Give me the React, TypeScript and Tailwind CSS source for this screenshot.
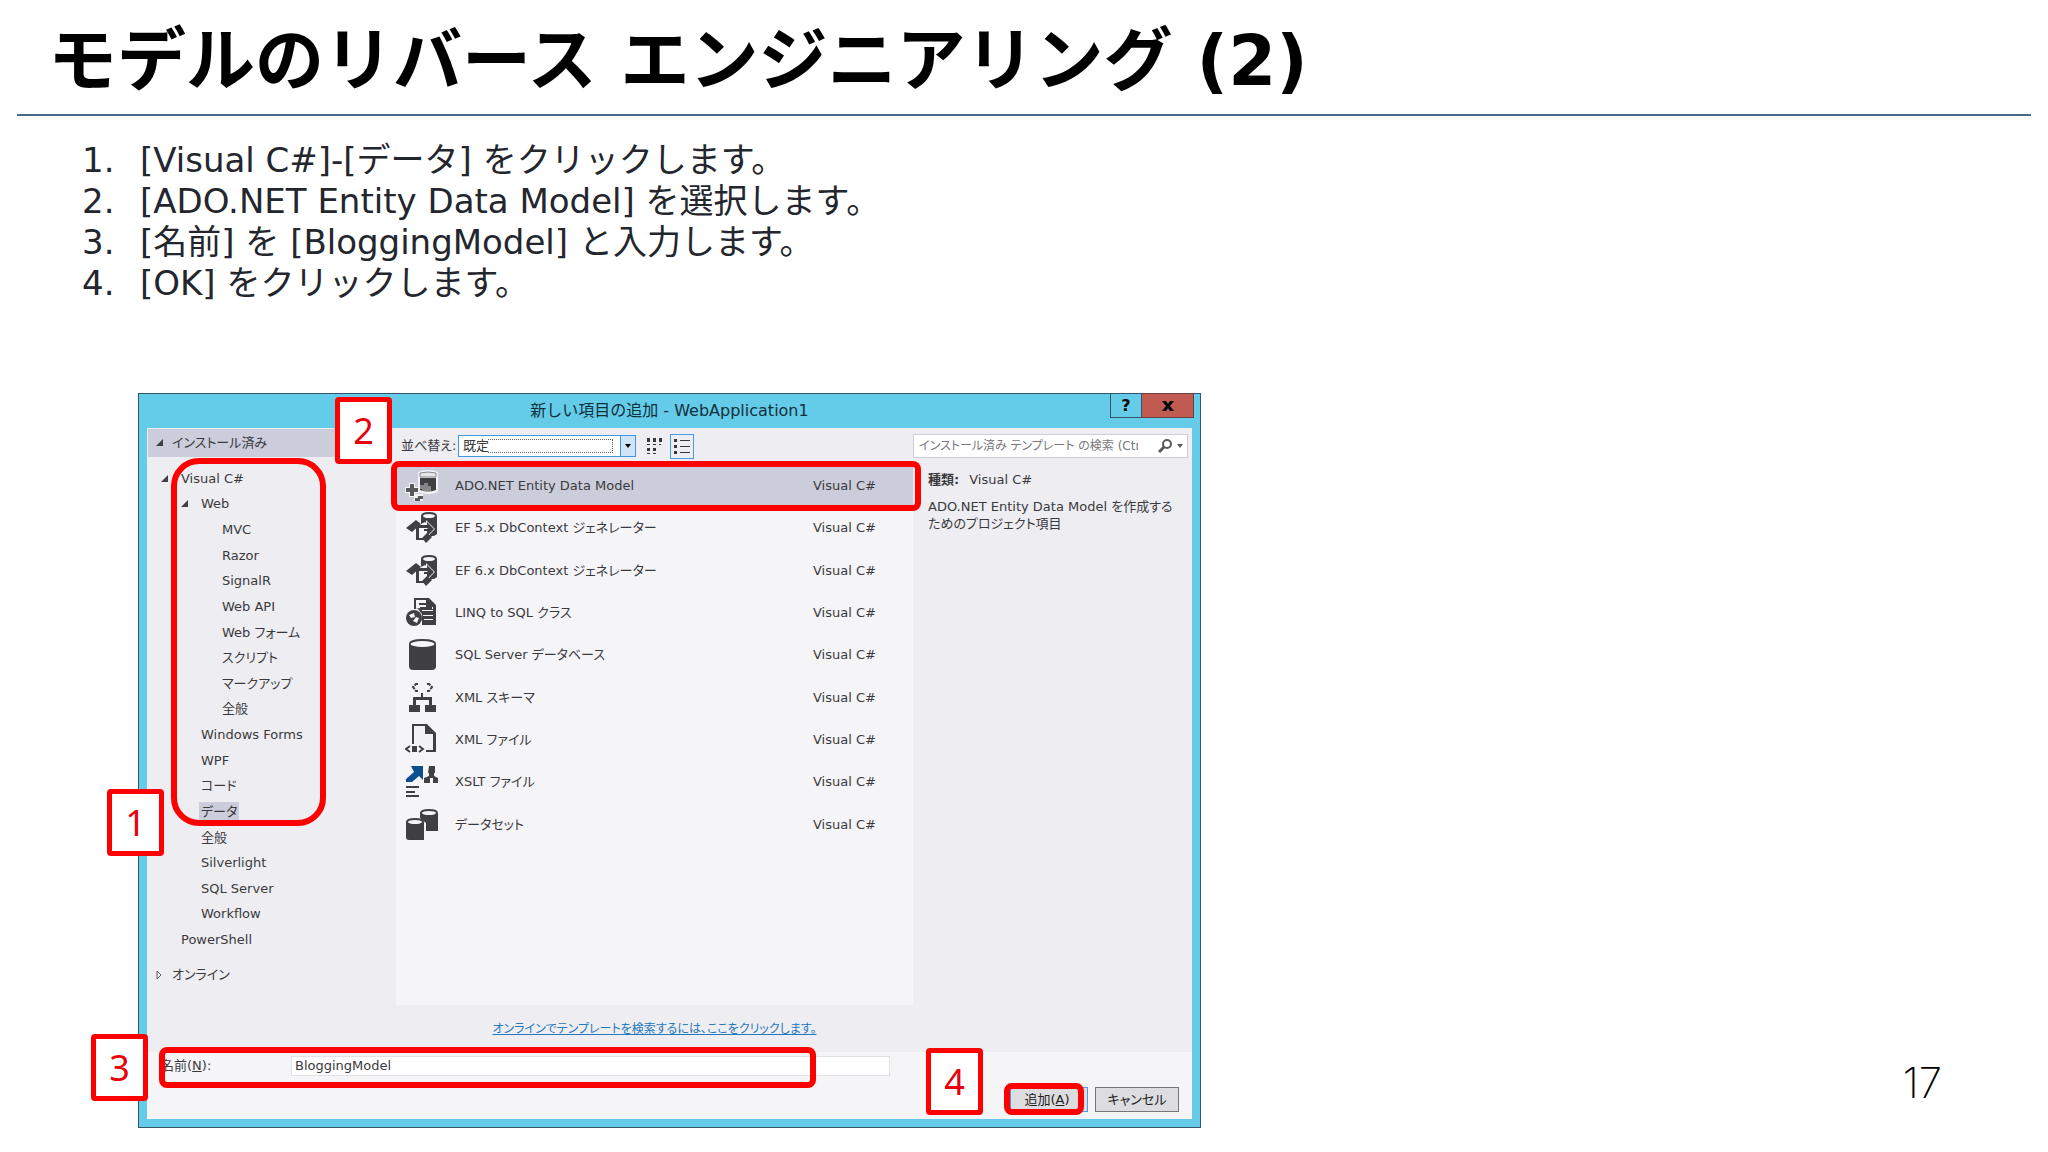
import type { ReactNode } from 'react';

const steps = [
    '[Visual C#]-[データ] をクリックします。',
    '[ADO.NET Entity Data Model] を選択します。',
    '[名前] を [BloggingModel] と入力します。',
    '[OK] をクリックします。',
];

const tree = [
    { label: 'Visual C#', level: 0, open: true },
    { label: 'Web', level: 1, open: true },
    { label: 'MVC', level: 2 },
    { label: 'Razor', level: 2 },
    { label: 'SignalR', level: 2 },
    { label: 'Web API', level: 2 },
    { label: 'Web フォーム', level: 2 },
    { label: 'スクリプト', level: 2 },
    { label: 'マークアップ', level: 2 },
    { label: '全般', level: 2 },
    { label: 'Windows Forms', level: 1 },
    { label: 'WPF', level: 1 },
    { label: 'コード', level: 1 },
    { label: 'データ', level: 1, selected: true },
    { label: '全般', level: 1 },
    { label: 'Silverlight', level: 1 },
    { label: 'SQL Server', level: 1 },
    { label: 'Workflow', level: 1 },
    { label: 'PowerShell', level: 0 },
];

const indent = ['pl-[14px]', 'pl-[34px]', 'pl-[55px]'];

const templates = [
    { name: 'ADO.NET Entity Data Model', icon: <EntityIcon /> },
    { name: 'EF 5.x DbContext ジェネレーター', icon: <GeneratorIcon /> },
    { name: 'EF 6.x DbContext ジェネレーター', icon: <GeneratorIcon /> },
    { name: 'LINQ to SQL クラス', icon: <LinqIcon /> },
    { name: 'SQL Server データベース', icon: <DatabaseIcon /> },
    { name: 'XML スキーマ', icon: <SchemaIcon /> },
    { name: 'XML ファイル', icon: <XmlFileIcon /> },
    { name: 'XSLT ファイル', icon: <XsltIcon /> },
    { name: 'データセット', icon: <DataSetIcon /> },
];

function Icon({ children }: { children: ReactNode }) {
    return (
        <svg viewBox="0 0 34 34" className="w-[34px] h-[34px] shrink-0" fill="#404044" aria-hidden="true">
            {children}
        </svg>
    );
}

function EntityIcon() {
    return (
        <Icon>
            <path d="M13 3q10-4 20 0v20q-10 4-20 0z" fill="#f4f4f6" />
            <path d="M15 9h16v12q-8 3-16 0z" />
            <path d="M15 4q8-2 16 0v4H15z" fill="#e6e6e8" stroke="#8a8a8e" />
            <path d="M4 14h6v4h4v6h-4v4H4v-4H0v-6h4zM9 25h9v7H9z" fill="#f4f4f6" />
            <path d="M5 15h4v4h4v4H9v4H5v-4H1v-4h4zM10 29h3v-2h5v3h-3v2h-5z" fill="#58585c" />
            <path d="M15 16h4v-2h4v3h3v5h-9v-2h-2z" fill="#85858a" />
        </Icon>
    );
}

function GeneratorIcon() {
    return (
        <Icon>
            <path d="M16 5q0-4 8-4t8 4v18q-3 3-8 2l3-7-7-7-4 2z" />
            <ellipse cx="24" cy="5" rx="6" ry="2" fill="#f5f4f6" />
            <path d="M10 13h11v-4l9 9-9 9v-4h-6v-2h-2z" fill="#f5f4f6" />
            <path d="M1 17l10-8 5 4-9 8zM17 27l5-5 5 4-6 6z" />
            <path d="M11 14h11v-3l7 7-7 7v-5h-3v-2h3l1-1h-9v10h5v2h-8z" />
        </Icon>
    );
}

function LinqIcon() {
    return (
        <Icon>
            <path d="M9 13V2h15l7 7v20H17V18l-4-5z" />
            <path d="M11 13V4h10v7h7v2H16l-2-1z" fill="#f5f4f6" />
            <path d="M14 7h8v2h-8zM15 11h12v2H15zM17 16h11v2H17zM19 20h9v2h-9zM19 25h9v1h-9z" />
            <path d="M17 14h11v1H17zM18 19h10v1H18zM19 23h9v1h-9z" fill="#f5f4f6" />
            <circle cx="9" cy="22" r="8" />
            <path d="M4 19l5-2 1 4-4 1zM11 21l3 1-2 5-4-2z" fill="#f5f4f6" />
        </Icon>
    );
}

function DatabaseIcon() {
    return (
        <Icon>
            <path d="M4 6q0-5 13.500-5T31 6v22q0 4-4 4H8q-4 0-4-4z" />
            <ellipse cx="17.500" cy="6" rx="12" ry="3" fill="#f5f4f6" />
        </Icon>
    );
}

function SchemaIcon() {
    return (
        <Icon>
            <path d="M13 3h-2L8 6l3 4h2M22 3h2l3 3-3 4h-2" fill="none" stroke="#404044" strokeWidth="2" strokeDasharray="4 1" />
            <path d="M16 12h2v4h9v8h4v7H20v-7h4v-5H11v5h4v7H4v-7h4v-8h8z" />
        </Icon>
    );
}

function XmlFileIcon() {
    return (
        <Icon>
            <path d="M7 1h15l9 9v19H21v-2h7V11h-8V3H9v18H7z" />
            <path d="M9 3h11v8h8v16h-7v-5H9z" fill="#f2f1f4" />
            <path d="M5 23l-4 3 4 3M14 23l4 3-4 3" fill="none" stroke="#404044" strokeWidth="2" />
            <path d="M7 23h5v6H7z" />
        </Icon>
    );
}

function XsltIcon() {
    return (
        <Icon>
            <path d="M6 1h12v14l-4-4-7 6H1v-3l8-7z" fill="#0b4f8f" />
            <path d="M24 1h6v7h-1v3l4 2v5h-5v-5h-3v5h-6v-5l5-2V8h-1z" />
            <path d="M1 21h13v2H1zM1 26h9v2H1zM1 30h13v2H1z" />
        </Icon>
    );
}

function DataSetIcon() {
    return (
        <Icon>
            <path d="M15 5q0-4 9-4t9 4v18H21v-8l-6-5z" />
            <ellipse cx="24" cy="5" rx="7" ry="2" fill="#f5f4f6" />
            <path d="M1 14q0-4 9-4t9 4v18H4q-3 0-3-3z" />
            <ellipse cx="10" cy="14" rx="7" ry="2" fill="#f5f4f6" />
        </Icon>
    );
}

function OpenArrow() {
    return (
        <svg viewBox="0 0 8 8" className="w-2 h-2 shrink-0" fill="#404044" aria-hidden="true">
            <path d="M7 0v7H0z" />
        </svg>
    );
}

/* Numbered red callout; the caller places it over the dialog */
function Badge({ value, className }: { value: number; className: string }) {
    return (
        <span
            className={`absolute z-20 flex w-[57px] h-[67px] items-center justify-center rounded-sm border-[5px] border-[#fe0000] bg-white font-['Noto_Sans',sans-serif] text-4xl text-[#e8000c] ${className}`}
        >
            {value}
        </span>
    );
}

function Dialog() {
    return (
        <section
            aria-label="新しい項目の追加"
            className="relative ml-[138px] w-[52vw] max-w-[1063px] min-w-[900px] border border-[#33566a] bg-[#64cbe8] px-2 pb-2 text-[13px] leading-5 text-[#3a3a3e] [font-feature-settings:'palt']"
        >
            {/* Title bar */}
            <header className="relative flex h-[34px] items-center justify-center">
                <h2 className="text-base text-[#12303c] [font-feature-settings:normal]">新しい項目の追加 - WebApplication1</h2>
                <div className="absolute top-0 -right-[2px] -mt-px flex h-[25px]">
                    <button aria-label="ヘルプ" className="w-8 border border-[#33566a] text-base leading-none font-bold text-black">?</button>
                    <button aria-label="閉じる" className="flex w-[52px] items-center justify-center border border-l-0 border-[#6b4044] bg-[#c15a50]">
                        <svg viewBox="0 0 12 10" className="w-3 h-[10px]" aria-hidden="true">
                            <path d="M0 0h4l2 3 2-3h4L8 5l4 5H8L6 7l-2 3H0l4-5z" />
                        </svg>
                    </button>
                </div>
            </header>

            <div className="flex bg-[#eeedf2]">
                {/* Categories */}
                <nav className="relative w-[249px] shrink-0">
                    <div className="mt-px ml-px mr-[5px] flex h-7 items-center gap-2 bg-[#cbcddb] pl-2">
                        <OpenArrow />
                        インストール済み
                    </div>
                    <ul className="mt-[9px] flex h-[487px] flex-col">
                        {tree.map((node, i) => (
                            <li key={i} className={`flex flex-1 items-center ${indent[node.level]}`}>
                                <span className="w-5">{node.open && <OpenArrow />}</span>
                                <a href="#" className={node.selected ? '-ml-0.5 bg-[#cbcddb] px-0.5' : ''}>{node.label}</a>
                            </li>
                        ))}
                    </ul>
                    <div className="mt-2 flex h-7 items-center gap-2 pl-[9px]">
                        <svg viewBox="0 0 8 10" className="w-2 h-[10px]" aria-hidden="true">
                            <path d="M1 1l4 4-4 4z" fill="none" stroke="#606064" />
                        </svg>
                        オンライン
                    </div>
                    <span className="absolute top-[30px] left-6 z-10 h-[368px] w-[155px] rounded-[28px] border-[6px] border-[#fe0000]" />
                    <Badge value={2} className="-top-[31px] left-[188px]" />
                    <Badge value={1} className="top-[361px] -left-10" />
                </nav>

                {/* Templates */}
                <div className="min-w-0 flex-1">
                    <div className="flex h-9 items-center pl-[5px]">
                        <label htmlFor="sort" className="w-[57px] whitespace-nowrap">並べ替え:</label>
                        <span className="relative">
                            <select id="sort" className="block h-[22px] w-[178px] appearance-none border border-[#3c9be0] bg-white pl-1 leading-5">
                                <option>既定</option>
                            </select>
                            <span className="pointer-events-none absolute top-1 right-[23px] h-[14px] w-[125px] border border-l-0 border-dotted border-[#606064]" />
                            <span className="pointer-events-none absolute top-0 right-0 flex h-[22px] w-4 items-center justify-center border border-[#3c9be0] bg-[#cfe4f7]">
                                <svg viewBox="0 0 6 4" className="w-[6px] h-1" aria-hidden="true"><path d="M0 0h6L3 4z" /></svg>
                            </span>
                        </span>
                        <button aria-label="小さいアイコン" className="ml-[10px] flex h-6 w-6 items-center">
                            <svg viewBox="0 0 16 16" className="w-4 h-4" fill="#38383c">
                                <path d="M1 0h3v4H1zM7 0h3v4H7zM13 0h3v4h-3zM1 6h3v1H1zM7 6h3v1H7zM13 6h2v1h-2zM1 10h3v3H1zM7 10h3v3H7zM1 15h3v1H1zM7 15h3v1H7z" />
                            </svg>
                        </button>
                        <button aria-label="一覧" className="flex h-[25px] w-6 items-center justify-center border border-[#4a9be8]">
                            <svg viewBox="0 0 16 16" className="w-4 h-4" fill="#38383c">
                                <path d="M0 1h3v3H0zM0 7h3v3H0zM0 13h3v3H0zM6 2h10v1H6zM6 8h10v1H6zM6 14h10v1H6z" />
                            </svg>
                        </button>
                    </div>
                    <div className="relative h-[541px] bg-[#f5f4f7]">
                        <ul className="flex h-[382px] flex-col pt-px">
                            {templates.map((item, i) => (
                                <li
                                    key={item.name}
                                    className={`flex flex-1 items-center pl-[9px] ${i === 0 ? 'bg-[#cbcddb]' : ''}`}
                                >
                                    {item.icon}
                                    <span className="flex-1 pl-4">{item.name}</span>
                                    <span className="w-[100px]">Visual C#</span>
                                </li>
                            ))}
                        </ul>
                        <span className="absolute -top-[3px] -left-[5px] -right-2 z-10 h-[50px] rounded-lg border-[6px] border-[#fe0000]" />
                    </div>
                    <div className="flex h-[47px] items-center justify-center">
                        <a href="#" className="text-xs text-[#2478bd] underline">
                            オンラインでテンプレートを検索するには、ここをクリックします。
                        </a>
                    </div>
                </div>

                {/* Details of the chosen template */}
                <aside className="w-[279px] shrink-0 pr-1">
                    <div className="mt-[6px] flex h-6 items-center border border-[#cccedb] bg-white pr-1">
                        <input
                            type="search"
                            aria-label="テンプレートの検索"
                            placeholder="インストール済み テンプレート の検索 (Ctrl+E)"
                            className="ml-[5px] min-w-0 flex-1 bg-transparent text-xs placeholder:text-[#77777c]"
                        />
                        <button aria-label="検索" className="ml-2 flex items-center gap-[5px]">
                            <svg viewBox="0 0 14 14" className="w-[14px] h-[14px]" aria-hidden="true">
                                <circle cx="9" cy="5" r="4" fill="none" stroke="#58585c" strokeWidth="2" />
                                <path d="M6 8l-5 5" stroke="#58585c" strokeWidth="3" />
                            </svg>
                            <svg viewBox="0 0 6 4" className="w-[6px] h-1" fill="#58585c" aria-hidden="true"><path d="M0 0h6L3 4z" /></svg>
                        </button>
                    </div>
                    <div className="pt-3 pl-[15px]">
                        <p><b className="mr-[10px]">種類:</b>Visual C#</p>
                        <p className="mt-2 leading-[17px]">
                            ADO.NET Entity Data Model を作成する<br />ためのプロジェクト項目
                        </p>
                    </div>
                </aside>
            </div>

            {/* Name and actions */}
            <form className="relative h-[67px] bg-[#f5f4f6]" onSubmit={(e) => e.preventDefault()}>
                <div className="flex pt-1 pl-[14px]">
                    <label htmlFor="item-name" className="w-[130px]">名前(<u>N</u>):</label>
                    <input
                        id="item-name"
                        defaultValue="BloggingModel"
                        className="h-5 w-[599px] border border-[#e2e2e6] bg-white pl-[3px]"
                    />
                </div>
                <div className="absolute right-[13px] bottom-[7px] flex h-[25px] gap-[7px]">
                    <button className="w-[78px] border border-[#4a9be8] bg-[#dddcde] pr-1 text-[#202024]">追加(<u>A</u>)</button>
                    <button type="button" className="w-[84px] border border-[#77777b] bg-[#dddcde] text-[#202024]">キャンセル</button>
                </div>
                <span className="absolute -top-[5px] left-3 z-10 h-[41px] w-[657px] rounded-lg border-[6px] border-[#fe0000]" />
                <span className="absolute right-[108px] bottom-1 z-10 h-8 w-20 rounded-lg border-[6px] border-[#fe0000]" />
                <Badge value={3} className="-top-[18px] -left-14" />
                <Badge value={4} className="-top-1 right-[209px]" />
            </form>
        </section>
    );
}

export default function App() {
    return (
        <main className="relative min-h-screen bg-white font-['DejaVu_Sans','Noto_Sans_CJK_JP',sans-serif]">
            <h1 className="mx-[17px] h-[116px] border-b-2 border-[#4a6a8c] pl-[31px] text-[69px] leading-[122px] font-bold text-black">
                モデルのリバース エンジニアリング (2)
            </h1>
            <ol className="mt-6 mb-[89px] pl-[82px] text-[34px] leading-[41px] text-[#23262d]">
                {steps.map((step, i) => (
                    <li key={step} className="flex">
                        <span className="w-[58px]">{i + 1}.</span>
                        {step}
                    </li>
                ))}
            </ol>
            <Dialog />
            <p className="absolute right-[106px] bottom-10 font-['Inter',sans-serif] text-[42px] leading-[58px] font-extralight text-black">17</p>
        </main>
    );
}
